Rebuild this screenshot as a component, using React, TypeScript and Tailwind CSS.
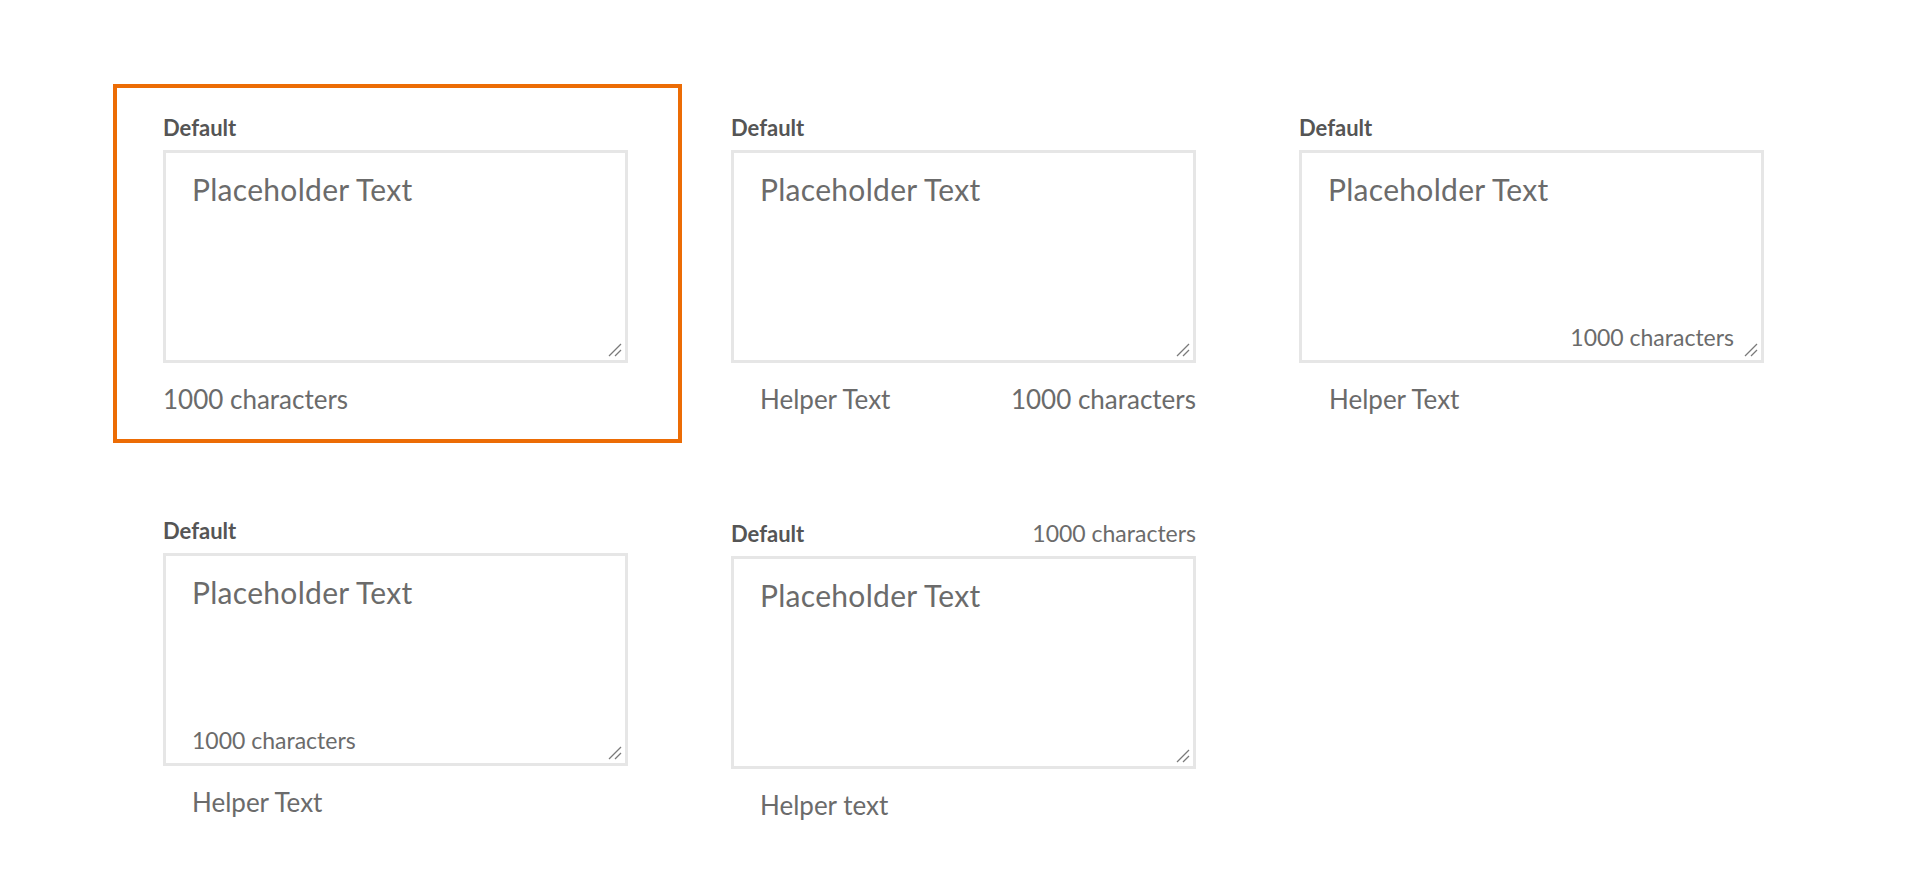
import React from "react";

const font = { fontFamily: "Lato, 'Open Sans', sans-serif" };

function ResizeGrip() {
  return (
    <svg
      className="absolute right-[3px] bottom-[3px]"
      width="14"
      height="14"
      viewBox="0 0 14 14"
      fill="none"
    >
      <line x1="1" y1="13" x2="13" y2="1" stroke="#7a7a7a" strokeWidth="1.3" />
      <line x1="7" y1="13" x2="13" y2="7" stroke="#7a7a7a" strokeWidth="1.3" />
    </svg>
  );
}

function Box({ counter }: { counter?: "right" | "left" }) {
  return (
    <div className="relative h-[213px] w-[465px] border-[3px] border-[#e6e6e6] bg-white pl-[26px] pt-[18px]">
      <p className="text-[30px] leading-9 tracking-[0.01em] text-[#6b6b6b]">Placeholder Text</p>
      {counter === "right" && (
        <span className="absolute right-[27px] bottom-[9px] text-[23px] leading-7 text-[#6b6b6b]">
          1000 characters
        </span>
      )}
      {counter === "left" && (
        <span className="absolute left-[26px] bottom-[9px] text-[23px] leading-7 text-[#6b6b6b]">
          1000 characters
        </span>
      )}
      <ResizeGrip />
    </div>
  );
}

function Label({ counter }: { counter?: boolean }) {
  return (
    <div className="flex h-6 items-center justify-between">
      <span className="text-[22px] font-bold text-[#555555]">Default</span>
      {counter && <span className="text-[23px] text-[#6b6b6b]">1000 characters</span>}
    </div>
  );
}

export default function App() {
  return (
    <div className="min-h-screen w-full bg-white pl-[163px] pt-[115px]" style={font}>
      {/* ROW 1 */}
      <div className="flex gap-[103px]">
        {/* selected variant */}
        <div className="-mt-[31px] -mb-[28px] -ml-[50px] -mr-[54px] border-4 border-[#ec6c05] pt-[27px] pb-[22px] pl-[46px] pr-[50px]">
          <div className="flex w-[465px] flex-col">
            <Label />
            <div className="mt-[11px]">
              <Box />
            </div>
            <p className="mt-[20px] text-[26px] leading-8 text-[#6b6b6b]">1000 characters</p>
          </div>
        </div>

        <div className="flex w-[465px] flex-col">
          <Label />
          <div className="mt-[11px]">
            <Box />
          </div>
          <div className="mt-[20px] flex justify-between pl-[29px] text-[26px] leading-8 text-[#6b6b6b]">
            <span>Helper Text</span>
            <span>1000 characters</span>
          </div>
        </div>

        <div className="flex w-[465px] flex-col">
          <Label />
          <div className="mt-[11px]">
            <Box counter="right" />
          </div>
          <p className="mt-[20px] pl-[30px] text-[26px] leading-8 text-[#6b6b6b]">Helper Text</p>
        </div>
      </div>

      {/* ROW 2 */}
      <div className="mt-[103px] flex items-start gap-[103px]">
        <div className="flex w-[465px] flex-col">
          <Label />
          <div className="mt-[11px]">
            <Box counter="left" />
          </div>
          <p className="mt-[20px] pl-[29px] text-[26px] leading-8 text-[#6b6b6b]">Helper Text</p>
        </div>

        <div className="mt-[3px] flex w-[465px] flex-col">
          <Label counter />
          <div className="mt-[11px]">
            <Box />
          </div>
          <p className="mt-[20px] pl-[29px] text-[26px] leading-8 text-[#6b6b6b]">Helper text</p>
        </div>
      </div>
    </div>
  );
}
